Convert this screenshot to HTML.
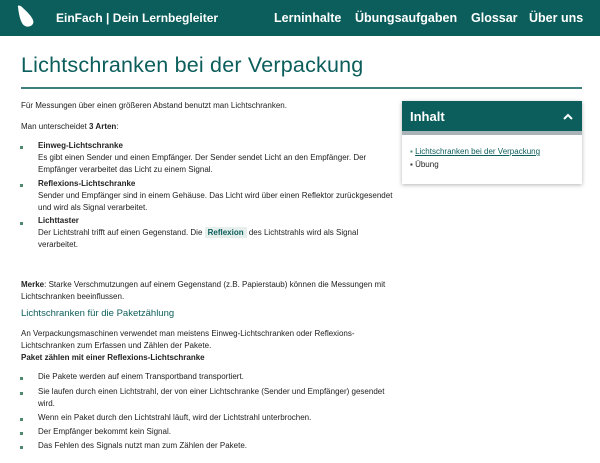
<!DOCTYPE html>
<html><head><meta charset="utf-8"><style>
*{margin:0;padding:0;box-sizing:border-box}
body{width:600px;height:463px;overflow:hidden;background:#fff;font-family:"Liberation Sans",sans-serif;color:#222;font-size:8px;position:relative}
.hdr{position:absolute;left:0;top:0;width:600px;height:36px;background:#0b5e5b;color:#fff;font-weight:bold}
.hdr span{position:absolute;top:11px;font-size:12px}
.hdr .nav{font-size:12.5px}
h1{position:absolute;left:21px;top:53px;font-size:21.5px;font-weight:normal;color:#0b5e5b;letter-spacing:0.2px}
.rule{position:absolute;left:21px;top:87px;width:561px;height:2px;background:#3d7f7c}
.t{position:absolute;left:21px;white-space:nowrap;line-height:12px}
.b{position:absolute;left:20px;width:3px;height:3px;background:#4d8a6f}
.li{left:38px}
.tag{background:#e6efec;color:#0b5e5b;font-weight:bold;padding:1px 3px}
h2{position:absolute;left:21px;top:308px;font-size:9.5px;font-weight:normal;color:#0b5e5b}
.box{position:absolute;left:402px;top:101px;width:180px;height:83px;box-shadow:0 1px 4px rgba(0,0,0,.3);background:#fff}
.boxh{height:30px;background:#0b5e5b;color:#fff;font-size:13px;font-weight:bold;padding:8px 8px}
.strip{height:4px;background:#a9b4b8}
</style></head><body>
<div class="hdr">
<svg style="position:absolute;left:15px;top:4px" width="22" height="24" viewBox="0 0 22 24"><path d="M3 3 C2 1,5 1,7 3 C10 6,16 11,18 16 C20 21,14 24,10 22 C6 20,4 12,3 3Z" fill="#fff"/></svg>
<span style="left:56px">EinFach | Dein Lernbegleiter</span>
<span class="nav" style="left:274px">Lerninhalte</span>
<span class="nav" style="left:355px">Übungsaufgaben</span>
<span class="nav" style="left:471px">Glossar</span>
<span class="nav" style="left:529px">Über uns</span>
</div>
<h1>Lichtschranken bei der Verpackung</h1>
<div class="rule"></div>
<div class="t" style="top:100px">Für Messungen über einen größeren Abstand benutzt man Lichtschranken.</div>
<div class="t" style="top:121px">Man unterscheidet <b>3 Arten</b>:</div>
<div class="b" style="top:146px"></div>
<div class="t li" style="top:140px"><b>Einweg-Lichtschranke</b><br>Es gibt einen Sender und einen Empfänger. Der Sender sendet Licht an den Empfänger. Der<br>Empfänger verarbeitet das Licht zu einem Signal.</div>
<div class="b" style="top:184px"></div>
<div class="t li" style="top:178px"><b>Reflexions-Lichtschranke</b><br>Sender und Empfänger sind in einem Gehäuse. Das Licht wird über einen Reflektor zurückgesendet<br>und wird als Signal verarbeitet.</div>
<div class="b" style="top:222px"></div>
<div class="t li" style="top:215px"><b>Lichttaster</b><br>Der Lichtstrahl trifft auf einen Gegenstand. Die <span class="tag">Reflexion</span> des Lichtstrahls wird als Signal<br>verarbeitet.</div>
<div class="t" style="top:279px"><b>Merke</b>: Starke Verschmutzungen auf einem Gegenstand (z.B. Papierstaub) können die Messungen mit<br>Lichtschranken beeinflussen.</div>
<h2>Lichtschranken für die Paketzählung</h2>
<div class="t" style="top:328px">An Verpackungsmaschinen verwendet man meistens Einweg-Lichtschranken oder Reflexions-<br>Lichtschranken zum Erfassen und Zählen der Pakete.<br><b>Paket zählen mit einer Reflexions-Lichtschranke</b></div>
<div class="b" style="top:377px"></div><div class="t li" style="top:371px">Die Pakete werden auf einem Transportband transportiert.</div>
<div class="b" style="top:392px"></div><div class="t li" style="top:386px">Sie laufen durch einen Lichtstrahl, der von einer Lichtschranke (Sender und Empfänger) gesendet<br>wird.</div>
<div class="b" style="top:418px"></div><div class="t li" style="top:412px">Wenn ein Paket durch den Lichtstrahl läuft, wird der Lichtstrahl unterbrochen.</div>
<div class="b" style="top:432px"></div><div class="t li" style="top:426px">Der Empfänger bekommt kein Signal.</div>
<div class="b" style="top:446px"></div><div class="t li" style="top:440px">Das Fehlen des Signals nutzt man zum Zählen der Pakete.</div>
<div class="box">
<div class="boxh">Inhalt<svg style="position:absolute;right:9px;top:12px" width="10" height="7" viewBox="0 0 10 7"><path d="M1 6 L5 2 L9 6" stroke="#fff" stroke-width="2" fill="none"/></svg></div>
<div class="strip"></div>
<div style="position:absolute;left:8px;top:44px;line-height:13px;font-size:8px">
<div><span style="color:#4d8a6f">▪</span> <span style="color:#0b5e5b;text-decoration:underline">Lichtschranken bei der Verpackung</span></div>
<div><span style="color:#333">▪</span> Übung</div>
</div>
</div>
</body></html>
